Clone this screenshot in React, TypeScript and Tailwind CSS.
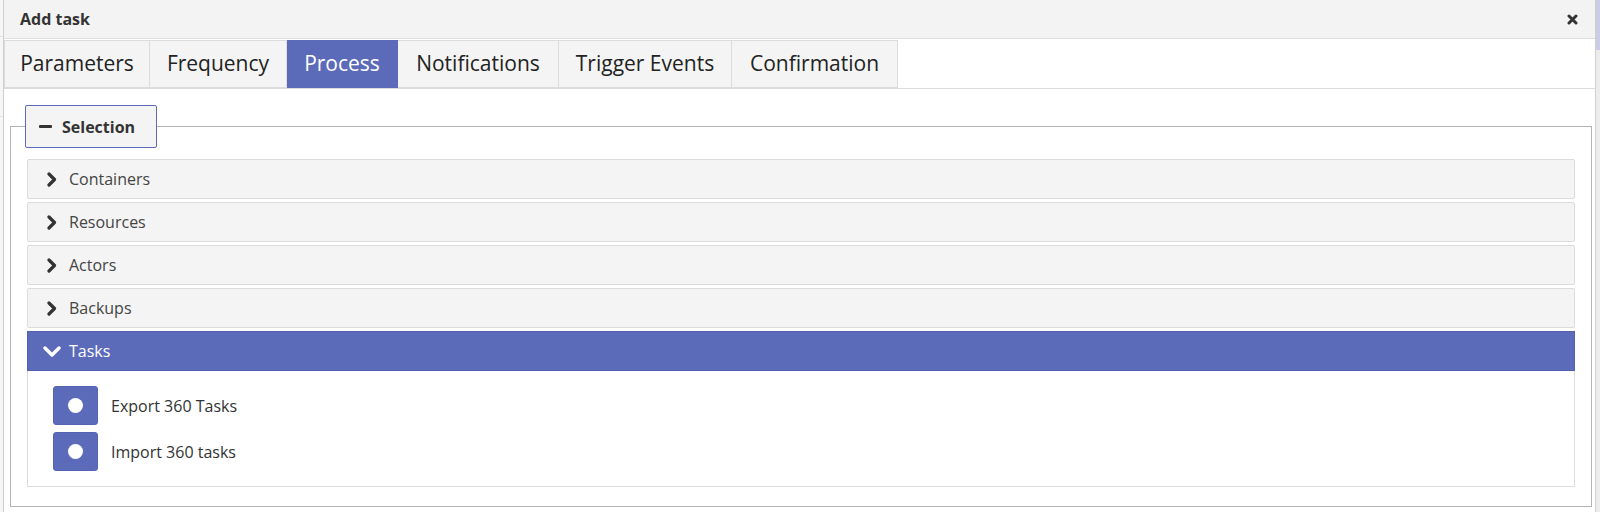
import { clsx } from "clsx";

const tabs = [
  { label: "Parameters", width: "w-[146px]" },
  { label: "Frequency", width: "w-[137px]" },
  { label: "Process", width: "w-[111px]", active: true },
  { label: "Notifications", width: "w-[161px]" },
  { label: "Trigger Events", width: "w-[173px]" },
  { label: "Confirmation", width: "w-[166px]" },
];

const sections = ["Containers", "Resources", "Actors", "Backups"];

const tasks = ["Export 360 Tasks", "Import 360 tasks"];

function ChevronRight() {
  return (
    <svg width="10" height="15" viewBox="0 0 10 15" className="shrink-0">
      <polyline
        points="2,2 7.5,7.5 2,13"
        fill="none"
        stroke="#333"
        strokeWidth="3.2"
        strokeLinecap="round"
        strokeLinejoin="round"
      />
    </svg>
  );
}

function ChevronDown() {
  return (
    <svg width="18" height="11" viewBox="0 0 18 11" className="shrink-0">
      <polyline
        points="2,2 9,9 16,2"
        fill="none"
        stroke="#fff"
        strokeWidth="3.4"
        strokeLinecap="round"
        strokeLinejoin="round"
      />
    </svg>
  );
}

function CloseIcon() {
  return (
    <svg width="11" height="11" viewBox="0 0 11 11">
      <path
        d="M2 2 L9 9 M9 2 L2 9"
        stroke="#333"
        strokeWidth="3"
        strokeLinecap="round"
      />
    </svg>
  );
}

function SectionRow({ label }: { label: string }) {
  return (
    <div className="flex items-center h-[40px] mb-[3px] bg-[#f4f4f4] border border-[#dcdcdc] rounded-[2px] pl-[19px] gap-[12px] text-[16px] text-[#444]">
      <ChevronRight />
      <span>{label}</span>
    </div>
  );
}

export default function App() {
  return (
    <div className="w-[1600px] h-[512px] flex overflow-hidden bg-[#f2f2f2] font-['Open_Sans',sans-serif]">
      <div className="w-[3px] shrink-0 flex flex-col bg-[#f6f6f6]">
        <div className="h-[37px] border-b border-[#e2e2e2]" />
        <div className="h-[80px] border-b border-[#e2e2e2]" />
      </div>

      <div className="w-[1593px] shrink-0 flex flex-col bg-white border-x border-[#cfcfcf]">
        <div className="h-[39px] shrink-0 flex items-center justify-between bg-[#f3f3f3] border-b border-[#dedede] pl-4 pr-[17px]">
          <span className="text-[16px] font-bold text-[#333] leading-none">Add task</span>
          <CloseIcon />
        </div>

        <div className="h-[50px] shrink-0 flex pt-px border-b border-[#dcdcdc]">
          {tabs.map((tab, i) => (
            <div
              key={tab.label}
              className={clsx(
                "h-[48px] flex items-center justify-center text-[21px] border-y border-r",
                tab.width,
                i === 0 && "border-l",
                tab.active
                  ? "bg-[#5c6bb9] text-white border-[#5c6bb9]"
                  : "bg-[#f4f4f4] text-[#222] border-[#dcdcdc]",
              )}
            >
              {tab.label}
            </div>
          ))}
        </div>

        <fieldset className="mt-[16px] ml-[6px] mr-[3px] border border-[#b4b4b4] px-4 pt-[11px] pb-[19px]">
          <legend className="-ml-[2px] h-[43px] w-[132px] flex items-center gap-[10px] pl-[13px] bg-[#f4f4f4] border border-[#5c6bb9] rounded-[2px]">
            <span className="w-[13px] h-[3px] bg-[#333] rounded-[1px]" />
            <span className="text-[16px] font-bold text-[#333]">Selection</span>
          </legend>

          {sections.map((s) => (
            <SectionRow key={s} label={s} />
          ))}

          <div className="flex items-center h-[40px] mt-px bg-[#5c6bb9] border border-[#5262b3] pl-[15px] gap-[8px] text-[16px] text-white">
            <ChevronDown />
            <span>Tasks</span>
          </div>
          <div className="border-x border-b border-[#dcdcdc] pl-[25px] pt-[15px] pb-[15px] flex flex-col gap-[7px]">
            {tasks.map((t) => (
              <div key={t} className="flex items-center gap-[13px]">
                <div className="w-[45px] h-[39px] rounded-[3px] bg-[#5c6bb9] border border-[#5464b5] flex items-center justify-center">
                  <span className="w-[15px] h-[15px] rounded-full bg-white" />
                </div>
                <span className="text-[16px] text-[#333]">{t}</span>
              </div>
            ))}
          </div>
        </fieldset>
      </div>

      <div className="flex-1 flex flex-col bg-[#ececec]">
        <div className="h-[50px] bg-[#c9cde6]" />
      </div>
    </div>
  );
}
